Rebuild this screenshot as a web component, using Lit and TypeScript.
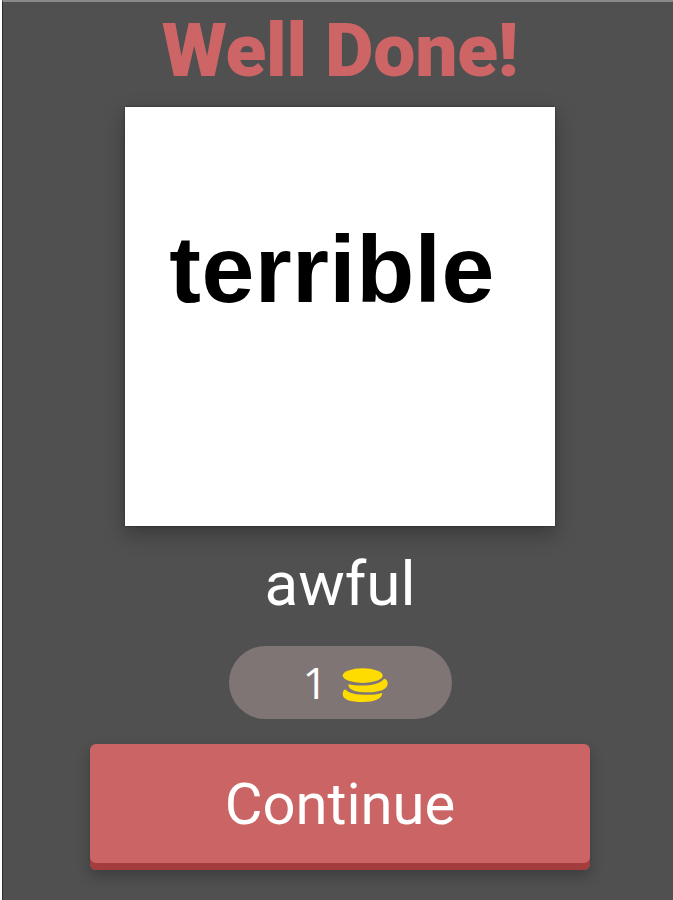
import { LitElement, html, css } from "lit";
import { customElement } from "lit/decorators.js";

@customElement("app-root")
class AppRoot extends LitElement {
  static styles = css`
    :host {
      display: block;
      box-sizing: border-box;
      height: 900px;
      padding-left: 2px;
      background: #fff;
      font-family: Roboto, sans-serif;
      color: #fff;
      overflow: hidden;
    }
    .screen {
      display: flex;
      flex-direction: column;
      align-items: center;
      box-sizing: border-box;
      height: 900px;
      padding-left: 4px;
      border-top: 2px solid #8a8a8a;
      border-left: 1px solid #2e2e2e;
      background: #505050;
    }
    h1 {
      margin: 8px 0 0;
      height: 80px;
      line-height: 80px;
      font-size: 75px;
      font-weight: 900;
      letter-spacing: -0.3px;
      color: #cd6465;
      white-space: nowrap;
    }
    .card {
      width: 430px;
      height: 419px;
      margin-top: 17px;
      background: #fff;
      box-shadow: 0 8px 20px rgba(0, 0, 0, 0.3), 0 0 2px rgba(0, 0, 0, 0.5);
      color: #000;
      font: bold 95px/100px "Liberation Sans", Arial, sans-serif;
      letter-spacing: 0.4px;
      text-align: center;
      padding: 112px 16px 0 0;
      box-sizing: border-box;
    }
    .answer {
      height: 70px;
      margin-top: 23px;
      font-size: 62px;
      line-height: 70px;
    }
    .reward {
      display: flex;
      align-items: center;
      box-sizing: border-box;
      width: 223px;
      height: 73px;
      margin-top: 27px;
      padding-left: 74px;
      border-radius: 37px;
      background: #807575;
      font: 44px/73px "Open Sans", sans-serif;
    }
    .coins {
      width: 46px;
      height: 35px;
      margin: 5px 0 0 14.5px;
      fill: #ffdc00;
    }
    button {
      width: 500px;
      height: 126px;
      margin-top: 25px;
      padding: 0;
      border: 0;
      border-radius: 6px;
      background: #cb6464;
      box-shadow: inset 0 -7px #a33c3c, 0 6px 14px rgba(0, 0, 0, 0.25);
      color: #fff;
      font: 58px/120px Roboto, sans-serif;
    }
    .label {
      display: block;
      height: 126px;
    }
  `;

  render() {
    return html`
      <main class="screen">
        <h1>Well Done!</h1>
        <div class="card">terrible</div>
        <div class="answer">awful</div>
        <div class="reward">
          <span>1</span>
          <svg class="coins" viewBox="0 0 46 35">
            <ellipse cx="20.7" cy="7.6" rx="20" ry="7.3" />
            <path
              d="M6.3 16.2C17 18.6 37 18.4 42 10.8C44.5 11.2 45.7 13 45.7 15.5C45.7 21.5 37 24.3 26 24.3C15 24.3 6.3 22.5 6.3 16.2Z"
            />
            <path
              d="M3.4 21.2C1.4 21.9 .7 23.5 .7 26.5C.7 31.5 8.5 34 20.7 34C32 34 40 31 40.3 25C36 26.3 31 26.8 25 26.8C14 26.8 6 25.3 3.4 21.2Z"
            />
          </svg>
        </div>
        <button><span class="label">Continue</span></button>
      </main>
    `;
  }
}
